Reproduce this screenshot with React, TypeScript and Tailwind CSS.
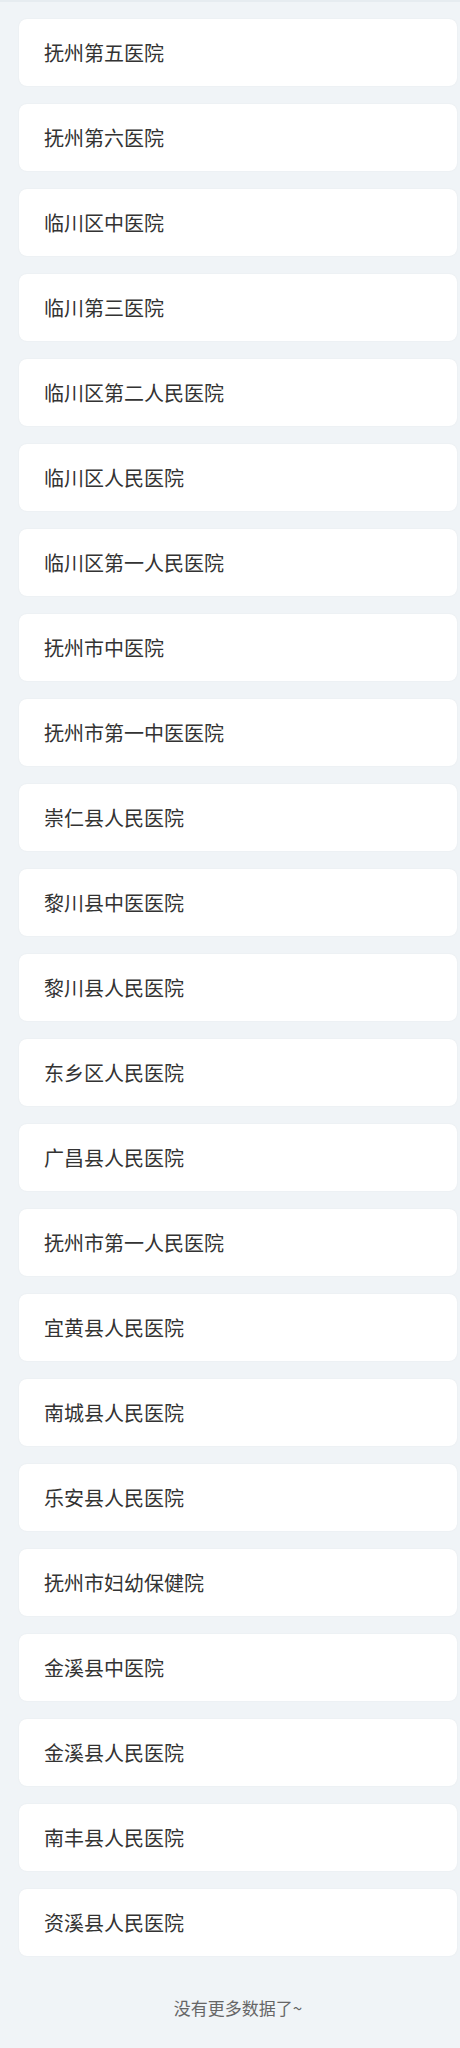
const hospitals = [
  "抚州第五医院",
  "抚州第六医院",
  "临川区中医院",
  "临川第三医院",
  "临川区第二人民医院",
  "临川区人民医院",
  "临川区第一人民医院",
  "抚州市中医院",
  "抚州市第一中医医院",
  "崇仁县人民医院",
  "黎川县中医医院",
  "黎川县人民医院",
  "东乡区人民医院",
  "广昌县人民医院",
  "抚州市第一人民医院",
  "宜黄县人民医院",
  "南城县人民医院",
  "乐安县人民医院",
  "抚州市妇幼保健院",
  "金溪县中医院",
  "金溪县人民医院",
  "南丰县人民医院",
  "资溪县人民医院",
];

export default function App() {
  return (
    <div
      className="min-h-[2048px] w-[460px] border-t-2 border-[#e6ecf0] bg-[#f0f4f7] pt-[17px] pl-[19px] pr-[3px]"
      style={{ fontFamily: '"Noto Sans CJK SC", "Noto Sans", sans-serif' }}
    >
      <div className="flex flex-col gap-[18px]">
        {hospitals.map((name) => (
          <div
            key={name}
            className="flex h-[67px] items-center rounded-lg bg-white pl-[25px] shadow-[0_0_2px_rgba(0,0,0,0.06)]"
          >
            <span className="text-[20px] leading-none text-[#333]">{name}</span>
          </div>
        ))}
      </div>
      <p className="pt-[43px] text-center text-[17px] leading-none text-[#666]">
        没有更多数据了~
      </p>
    </div>
  );
}
